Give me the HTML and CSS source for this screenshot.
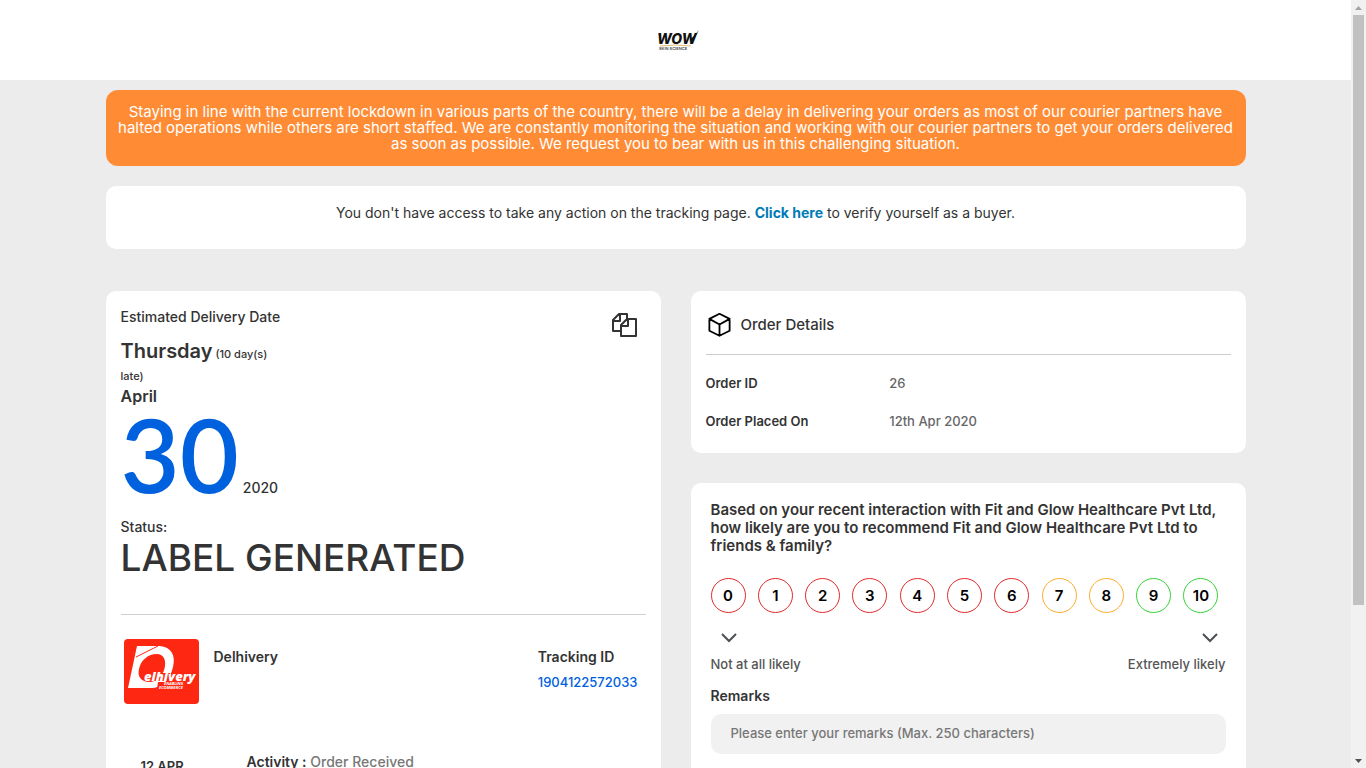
FILE: index.html
```html
<!DOCTYPE html>
<html lang="en">
<head>
<meta charset="utf-8">
<title>Order Tracking</title>
<link rel="stylesheet" href="styles.css">
</head>
<body>
<div class="page">
  <header class="topbar">
    <svg class="brand" viewBox="0 0 48 26" width="48" height="26" role="img" aria-label="WOW Skin Science">
      <text x="5" y="17" class="brand-name">WOW</text>
      <path d="M38 12l2 3L47 3l-6 7z" fill="#111"/>
      <path d="M8 19q15-2 31 0" fill="none" stroke="#e8b878"/>
      <text x="7" y="23" class="brand-sub">SKIN SCIENCE</text>
    </svg>
  </header>
  <main class="container">
    <p class="banner">Staying in line with the current lockdown in various parts of the country, there will be a delay in delivering your orders as most of our courier partners have halted operations while others are short staffed. We are constantly monitoring the situation and working with our courier partners to get your orders delivered as soon as possible. We request you to bear with us in this challenging situation.</p>
    <p class="card notice">You don't have access to take any action on the tracking page. <a href="#verify">Click here</a> to verify yourself as a buyer.</p>
    <div class="columns">
      <section class="card shipment">
        <div class="estimate-row">
          <div class="estimate">
            <h2 class="label">Estimated Delivery Date</h2>
            <p class="weekday"><strong>Thursday</strong> (10 day(s) late)</p>
            <p class="month">April</p>
            <p class="date"><span class="day">30</span><span class="year">2020</span></p>
          </div>
          <button class="copy" type="button" aria-label="Copy">
            <svg viewBox="0 0 26 26" width="26" height="26" fill="none" stroke="#333" stroke-width="2" stroke-linejoin="round">
              <path d="M10 19H2V8l6-6h8v5M2 9h7V2"/>
              <path d="M10 13l6-6h9v17H10zM10 14h7V7"/>
            </svg>
          </button>
        </div>
        <p class="label">Status:</p>
        <h1 class="status">LABEL GENERATED</h1>
        <hr class="rule">
        <div class="courier">
          <svg class="courier-logo" viewBox="0 0 75 65" width="75" height="65" role="img" aria-label="Delhivery">
            <rect width="75" height="65" rx="4" fill="#fe2712"/>
            <path fill="#fff" fill-rule="evenodd" d="M13 7h23c11 1 16 9 13 21C46 41 38 49 27 49H4zM33 15c-9 0-16 6-18 15-2 8 3 13 10 13 9 0 15-8 16-16 1-7-2-12-8-12z"/>
            <path d="M12 18L34 7" stroke="#fe2712" fill="none"/>
            <path d="M22 34h24v8H32l-10-1z" fill="#fe2712"/>
            <path d="M34 43h12l-3 7H33z" fill="#fe2712"/>
            <text x="20" y="42" class="logo-word">elhivery</text>
            <text x="40" y="46" class="logo-tag">ENABLING</text>
            <text x="35" y="50" class="logo-tag">ECOMMERCE</text>
          </svg>
          <p class="strong courier-name">Delhivery</p>
          <div class="tracking">
            <p class="strong">Tracking ID</p>
            <a href="#tracking">1904122572033</a>
          </div>
        </div>
        <div class="event">
          <time class="event-date">12 APR</time>
          <p><b>Activity :</b> <span class="muted">Order Received</span></p>
        </div>
      </section>
      <div class="side">
        <section class="card order">
          <h2 class="order-title">
            <svg viewBox="0 0 24 24" width="27" height="27" fill="none" stroke="#000" stroke-width="1.600" stroke-linejoin="round" stroke-linecap="round">
              <path d="M12 2.500l9 4.500v10.500L12 22l-9-4.500V7zM3 7l9 5 9-5M12 12v10"/>
            </svg>
            Order Details
          </h2>
          <dl class="facts">
            <dt>Order ID</dt><dd>26</dd>
            <dt>Order Placed On</dt><dd>12th Apr 2020</dd>
          </dl>
        </section>
        <section class="card survey">
          <h2 class="question">Based on your recent interaction with Fit and Glow Healthcare Pvt Ltd, how likely are you to recommend Fit and Glow Healthcare Pvt Ltd to friends &amp; family?</h2>
          <div class="scores">
            <button type="button" class="score low">0</button>
            <button type="button" class="score low">1</button>
            <button type="button" class="score low">2</button>
            <button type="button" class="score low">3</button>
            <button type="button" class="score low">4</button>
            <button type="button" class="score low">5</button>
            <button type="button" class="score low">6</button>
            <button type="button" class="score mid">7</button>
            <button type="button" class="score mid">8</button>
            <button type="button" class="score high">9</button>
            <button type="button" class="score high">10</button>
          </div>
          <div class="ends">
            <svg viewBox="0 0 16 10" width="16" height="10" fill="none" stroke="#4c5055" stroke-width="2"><path d="M1 1l7 7 7-7"/></svg>
            <svg viewBox="0 0 16 10" width="16" height="10" fill="none" stroke="#4c5055" stroke-width="2"><path d="M1 1l7 7 7-7"/></svg>
          </div>
          <div class="end-labels"><span>Not at all likely</span><span>Extremely likely</span></div>
          <label class="remarks-label" for="remarks">Remarks</label>
          <input class="remarks" id="remarks" type="text" maxlength="250" placeholder="Please enter your remarks (Max. 250 characters)">
        </section>
      </div>
    </div>
  </main>
</div>
<div class="scrollbar" aria-hidden="true">
  <svg viewBox="0 0 15 15" width="15" height="15"><path d="M4 10h7L7.500 6z" fill="#a3a3a3"/></svg>
  <div class="track"><div class="thumb"></div></div>
  <svg viewBox="0 0 15 15" width="15" height="15"><path d="M4 6h7l-3.500 4z" fill="#505050"/></svg>
</div>
</body>
</html>
```
FILE: styles.css
```css
* { box-sizing: border-box; }
body {
  margin: 0;
  height: 100vh;
  display: flex;
  overflow: hidden;
  background: #ececec;
  color: #333;
  font: 500 14px/20px Inter, "Open Sans", sans-serif;
}
h1, h2, p, dl, dd { margin: 0; font-size: inherit; font-weight: inherit; }
a { text-decoration: none; color: #005fde; }
button { font: inherit; padding: 0; background: none; cursor: pointer; }

.page { flex: 1; min-width: 0; overflow-y: auto; scrollbar-width: none; }
.topbar { height: 80px; background: #fff; display: flex; justify-content: center; align-items: center; }
.brand-name { font: italic 800 14px Inter, sans-serif; fill: #111; }
.brand-sub { font: 600 4px Inter, sans-serif; fill: #444; }

.container { max-width: 1140px; margin: 0 auto; padding-top: 10px; }
.card { background: #fff; border-radius: 10px; }
.banner {
  padding: 14px 10px;
  border-radius: 12px;
  background: #ff8c35;
  color: #fff;
  font-size: 15px;
  font-weight: 400;
  line-height: 16px;
  text-align: center;
}
.notice { margin-top: 20px; padding: 17px 15px 26px; text-align: center; font-weight: 400; }
.notice a { color: #007bb6; font-weight: 700; }

.columns { display: grid; grid-template-columns: 1fr 1fr; gap: 30px; margin-top: 42px; }
.shipment { padding: 16px 15px 40px; }
.estimate-row { display: flex; justify-content: space-between; align-items: flex-start; }
.estimate { width: 164px; }
.weekday { margin-top: 13px; font-size: 11px; line-height: 22px; }
.weekday strong { font-size: 20px; font-weight: 600; }
.month { font-size: 16px; font-weight: 600; line-height: 18px; }
.date { display: flex; align-items: baseline; gap: 4px; }
.day { font: 600 102px/98px Lato, sans-serif; color: #0061df; }
.year { font-size: 14px; }
.copy { border: 0; margin: 5px 9px 0 0; height: 26px; }
.estimate-row + .label { margin-top: 14px; }
.status { font-size: 37px; line-height: 42px; }
.rule { margin: 35px 0 24px; border: 0; border-top: 1px solid #cdd1d2; }
.courier { display: flex; padding: 0 8px 0 3px; }
.logo-word { font: italic 800 13px "Open Sans", sans-serif; fill: #fff; }
.logo-tag { font: italic 700 4px "Open Sans", sans-serif; fill: #fff; }
.strong { font-weight: 600; }
.courier-name { margin: 8px auto 0 15px; }
.tracking { padding-top: 8px; line-height: 25px; }
.tracking .strong { line-height: 20px; margin-bottom: 2px; }
.tracking a { font-size: 13px; }
.event { display: grid; grid-template-columns: 106px 1fr; padding-left: 20px; margin-top: 48px; }
.event b { font-weight: 600; }
.event-date { font-size: 13px; font-weight: 600; padding-top: 4px; }
.muted { color: #777; }

.side { display: flex; flex-direction: column; gap: 30px; }
.order { padding: 16px 15px 22px; }
.order-title { display: flex; align-items: center; gap: 8px; height: 48px; padding: 0 0 12px; border-bottom: 1px solid #ccc; font-size: 15px; }
.facts { display: grid; grid-template-columns: 35% 1fr; row-gap: 18px; padding-top: 18px; font-size: 13px; }
.facts dt { font-weight: 600; }
.facts dd { color: #666; }
.survey { padding: 18px 20px 40px; flex: 1; }
.question { font-size: 15px; line-height: 18px; font-weight: 600; }
.scores { display: flex; justify-content: space-between; margin: 23px 7px 0 0; }
.score { width: 35px; height: 35px; border: 1px solid; border-radius: 50%; color: #000; font-size: 15px; font-weight: 600; }
.low { border-color: #e12a2a; }
.mid { border-color: #ffab2e; }
.high { border-color: #35d335; }
.ends { display: flex; justify-content: space-between; padding: 20px 8px 0 10px; }
.end-labels { display: flex; justify-content: space-between; margin-top: 11px; color: #555; font-size: 13px; }
.remarks-label { display: block; margin-top: 12px; font-weight: 600; }
.remarks { width: 100%; height: 40px; margin-top: 8px; padding: 0 20px 2px; border: 0; border-radius: 10px; background: #f1f1f1; font: inherit; font-size: 13px; }
.remarks::placeholder { color: #777; }

.scrollbar { width: 15px; background: #f1f1f1; display: flex; flex-direction: column; }
.track { flex: 1; padding: 0 2px; }
.thumb { height: 80%; background: #c1c1c1; }
```
